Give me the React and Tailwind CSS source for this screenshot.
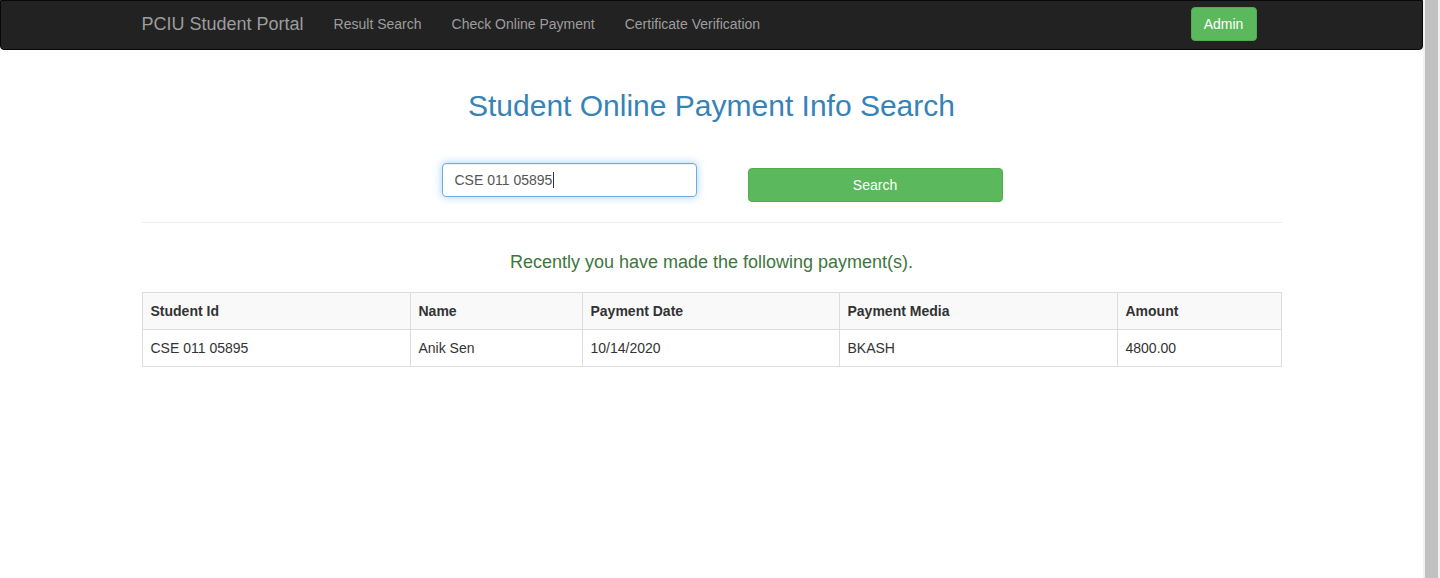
function App() {
    const rows = [
        { id: "CSE 011 05895", name: "Anik Sen", date: "10/14/2020", media: "BKASH", amount: "4800.00" },
    ];

    return (
        <div className="flex h-[578px] w-full bg-white font-['Liberation_Sans',Arial,sans-serif] text-[14px] text-[#333]">
            {/* page */}
            <div className="min-w-0 flex-1">
                {/* navbar */}
                <nav className="h-[50px] rounded-b-[4px] border border-[#080808] bg-[#222]">
                    <div className="mx-auto flex h-full w-[1140px] items-center">
                        <span className="mb-[2px] pr-[15px] text-[18px] text-[#9d9d9d]">PCIU Student Portal</span>
                        <a className="mb-[2px] px-[15px] text-[#9d9d9d]">Result Search</a>
                        <a className="mb-[2px] px-[15px] text-[#9d9d9d]">Check Online Payment</a>
                        <a className="mb-[2px] px-[15px] text-[#9d9d9d]">Certificate Verification</a>
                        <button className="ml-auto mr-[25px] mb-[3px] h-[34px] w-[66px] rounded-[4px] border border-[#4cae4c] bg-[#5cb85c] pt-[1px] text-white">
                            Admin
                        </button>
                    </div>
                </nav>

                <div className="mx-auto w-[1140px]">
                    {/* title */}
                    <h1 className="mt-[38px] text-center text-[30px] leading-[36px] text-[#3683b8]">
                        Student Online Payment Info Search
                    </h1>

                    {/* search form */}
                    <div className="mt-[39px] flex items-start pl-[300px]">
                        <div className="flex h-[34px] w-[255px] items-center rounded-[4px] border border-[#66afe9] px-[12px] text-[#555] shadow-[inset_0_1px_1px_rgba(0,0,0,.075),0_0_8px_rgba(102,175,233,.6)]">
                            CSE 011 05895
                            <span className="ml-[1px] h-[16px] w-px bg-[#333]"></span>
                        </div>
                        <button className="ml-[51px] mt-[5px] h-[34px] w-[255px] rounded-[4px] border border-[#4cae4c] bg-[#5cb85c] text-white">
                            Search
                        </button>
                    </div>

                    <hr className="mt-[20px] border-t border-[#eee]" />

                    {/* message */}
                    <p className="mt-[28px] text-center text-[18px] leading-[22px] text-[#3c763d]">
                        Recently you have made the following payment(s).
                    </p>

                    {/* table */}
                    <table className="mt-[19px] w-full border-collapse border border-[#ddd]">
                        <thead>
                            <tr className="bg-[#f9f9f9]">
                                <th className="h-[37px] w-[268px] border border-[#ddd] px-[8px] text-left font-bold">Student Id</th>
                                <th className="w-[172px] border border-[#ddd] px-[8px] text-left font-bold">Name</th>
                                <th className="w-[257px] border border-[#ddd] px-[8px] text-left font-bold">Payment Date</th>
                                <th className="w-[278px] border border-[#ddd] px-[8px] text-left font-bold">Payment Media</th>
                                <th className="border border-[#ddd] px-[8px] text-left font-bold">Amount</th>
                            </tr>
                        </thead>
                        <tbody>
                            {rows.map((r, i) => (
                                <tr key={i}>
                                    <td className="h-[37px] border border-[#ddd] px-[8px]">{r.id}</td>
                                    <td className="border border-[#ddd] px-[8px]">{r.name}</td>
                                    <td className="border border-[#ddd] px-[8px]">{r.date}</td>
                                    <td className="border border-[#ddd] px-[8px]">{r.media}</td>
                                    <td className="border border-[#ddd] px-[8px]">{r.amount}</td>
                                </tr>
                            ))}
                        </tbody>
                    </table>
                </div>
            </div>

            {/* scrollbar */}
            <div className="flex w-[17px] shrink-0 bg-[#f1f1f1] px-[2px]">
                <div className="flex-1 bg-[#c1c1c1]"></div>
            </div>
        </div>
    );
}

export default App;
